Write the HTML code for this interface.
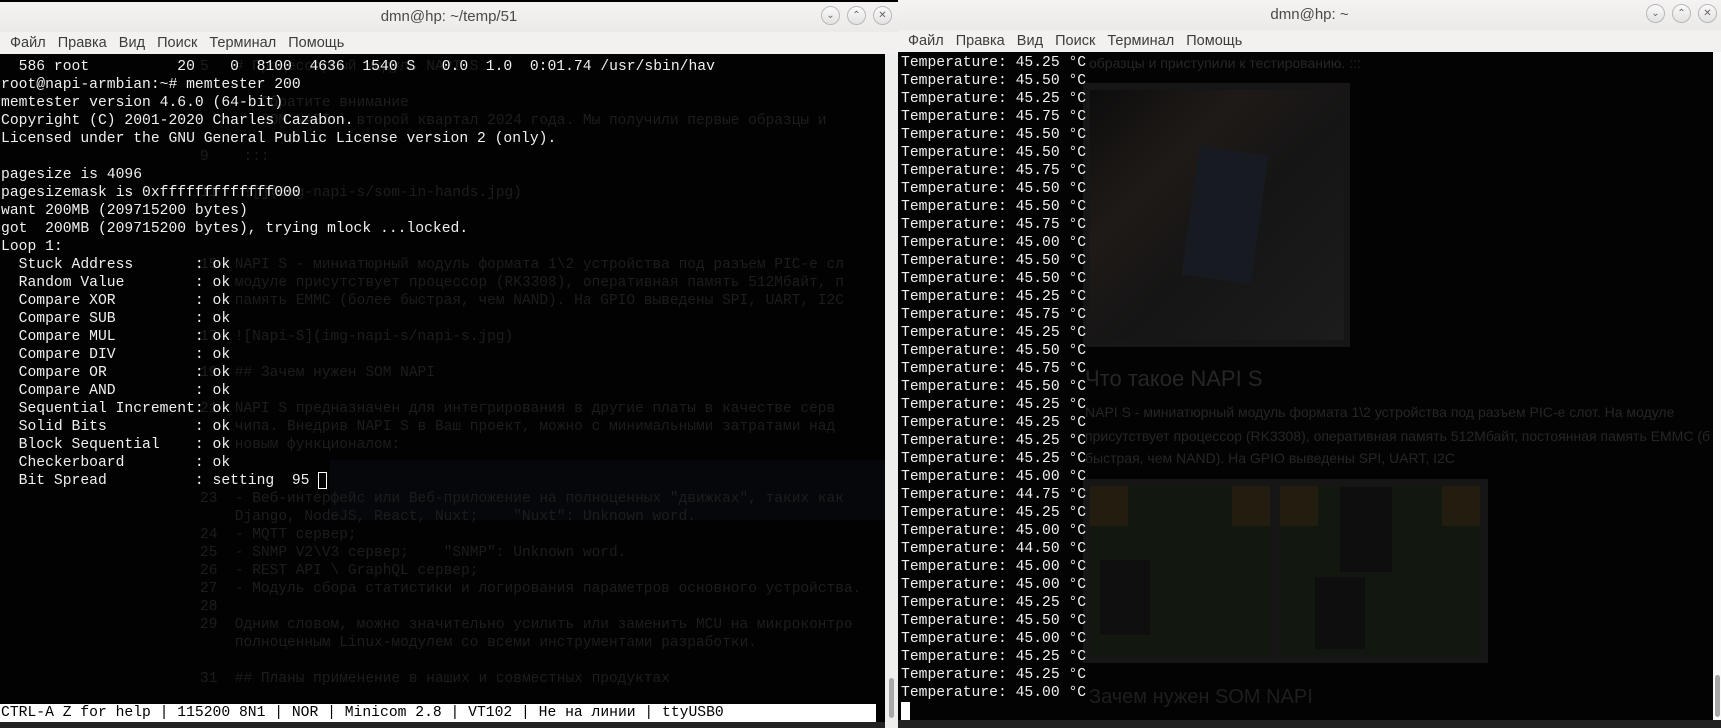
<!DOCTYPE html>
<html><head><meta charset="utf-8"><style>
*{margin:0;padding:0;box-sizing:border-box}
body{width:1721px;height:728px;background:#1b1b1b;position:relative;overflow:hidden;font-family:"Liberation Sans","DejaVu Sans",sans-serif}
.abs{position:absolute}
.title{background:linear-gradient(#f4f3f2,#ebeae9);color:#4a4a4a;font-size:15px;text-align:center;line-height:30px}
.menu{background:#f2f1f0;color:#3c3c3c;font-size:14.5px;line-height:22px;white-space:pre}
.btn{position:absolute;top:6px;width:19px;height:19px;border-radius:50%;border:1px solid #b8b8b8;background:linear-gradient(#fafafa,#e2e2e2);color:#666;font-size:10px;line-height:17px;text-align:center}
pre{font-family:"Liberation Mono","DejaVu Sans Mono",monospace;font-size:14.7px;line-height:18px;color:#f0f0f0;position:absolute;white-space:pre}
.ghost{font-family:"Liberation Mono",monospace;font-size:14.5px;line-height:18px;color:#1d1d1d;white-space:pre;position:absolute}
.gs{font-family:"Liberation Sans","DejaVu Sans",sans-serif;color:#262626;position:absolute;white-space:pre}
</style></head><body>
<div class="abs" style="left:0;top:0;width:898px;height:728px;background:#000"></div>
<div class="abs title" style="left:0;top:2px;width:898px;height:30px">dmn@hp: ~/temp/51</div>
<div class="btn" style="left:821px;top:6px">&#8964;</div>
<div class="btn" style="left:847px;top:6px">&#8963;</div>
<div class="btn" style="left:873px;top:6px">&#10005;</div>
<div class="abs menu" style="left:0;top:32px;width:898px;height:22px;padding-left:10px">Файл   Правка   Вид   Поиск   Терминал   Помощь</div>
<div class="abs" style="left:0;top:54px;width:885px;height:650px;background:#020202"></div>
<div class="abs" style="left:330px;top:460px;width:555px;height:60px;background:#05070a"></div>
<div class="ghost" style="left:200px;top:58px">5   # Процессорный модуль NAPI S</div>
<div class="ghost" style="left:200px;top:94px">       Обратите внимание</div>
<div class="ghost" style="left:200px;top:112px">       SOM NAPI - второй квартал 2024 года. Мы получили первые образцы и</div>
<div class="ghost" style="left:200px;top:148px">9    :::</div>
<div class="ghost" style="left:200px;top:184px">11   ![](img-napi-s/som-in-hands.jpg)</div>
<div class="ghost" style="left:200px;top:256px">15  NAPI S - миниатюрный модуль формата 1\2 устройства под разъем PIC-e сл</div>
<div class="ghost" style="left:200px;top:274px">    модуле присутствует процессор (RK3308), оперативная память 512Мбайт, п</div>
<div class="ghost" style="left:200px;top:292px">    память EMMC (более быстрая, чем NAND). На GPIO выведены SPI, UART, I2C</div>
<div class="ghost" style="left:200px;top:328px">17  ![Napi-S](img-napi-s/napi-s.jpg)</div>
<div class="ghost" style="left:200px;top:364px">19  ## Зачем нужен SOM NAPI</div>
<div class="ghost" style="left:200px;top:400px">21  NAPI S предназначен для интегрирования в другие платы в качестве серв</div>
<div class="ghost" style="left:200px;top:418px">    чипа. Внедрив NAPI S в Ваш проект, можно с минимальными затратами над</div>
<div class="ghost" style="left:200px;top:436px">    новым функционалом:</div>
<div class="ghost" style="left:200px;top:490px">23  - Веб-интерфейс или Веб-приложение на полноценных "движках", таких как</div>
<div class="ghost" style="left:200px;top:508px">    Django, NodeJS, React, Nuxt;    "Nuxt": Unknown word.</div>
<div class="ghost" style="left:200px;top:526px">24  - MQTT сервер;</div>
<div class="ghost" style="left:200px;top:544px">25  - SNMP V2\V3 сервер;    "SNMP": Unknown word.</div>
<div class="ghost" style="left:200px;top:562px">26  - REST API \ GraphQL сервер;</div>
<div class="ghost" style="left:200px;top:580px">27  - Модуль сбора статистики и логирования параметров основного устройства.</div>
<div class="ghost" style="left:200px;top:598px">28</div>
<div class="ghost" style="left:200px;top:616px">29  Одним словом, можно значительно усилить или заменить MCU на микроконтро</div>
<div class="ghost" style="left:200px;top:634px">    полноценным Linux-модулем со всеми инструментами разработки.</div>
<div class="ghost" style="left:200px;top:670px">31  ## Планы применение в наших и совместных продуктах</div>
<pre style="left:1px;top:58px">  586 root          20    0  8100  4636  1540 S   0.0  1.0  0:01.74 /usr/sbin/hav
root@napi-armbian:~# memtester 200
memtester version 4.6.0 (64-bit)
Copyright (C) 2001-2020 Charles Cazabon.
Licensed under the GNU General Public License version 2 (only).

pagesize is 4096
pagesizemask is 0xfffffffffffff000
want 200MB (209715200 bytes)
got  200MB (209715200 bytes), trying mlock ...locked.
Loop 1:
  Stuck Address       : ok
  Random Value        : ok
  Compare XOR         : ok
  Compare SUB         : ok
  Compare MUL         : ok
  Compare DIV         : ok
  Compare OR          : ok
  Compare AND         : ok
  Sequential Increment: ok
  Solid Bits          : ok
  Block Sequential    : ok
  Checkerboard        : ok
  Bit Spread          : setting  95</pre>
<div class="abs" style="left:318px;top:472px;width:9px;height:17px;border:1px solid #fff"></div>
<div class="abs" style="left:0;top:704px;width:876px;height:18px;background:#fff"></div>
<pre style="left:1px;top:704px;color:#000;line-height:18px">CTRL-A Z for help | 115200 8N1 | NOR | Minicom 2.8 | VT102 | Не на линии | ttyUSB0</pre>
<div class="abs" style="left:885px;top:54px;width:13px;height:674px;background:#eeeeec"></div>
<div class="abs" style="left:889px;top:678px;width:5px;height:40px;border-radius:3px;background:#a8a8a8"></div>
<div class="abs" style="left:0;top:722px;width:885px;height:6px;background:#222"></div>

<div class="abs" style="left:898px;top:0;width:823px;height:728px;background:#000"></div>
<div class="abs title" style="left:898px;top:0;width:823px;height:30px">dmn@hp: ~</div>
<div class="btn" style="left:1646px;top:4px">&#8964;</div>
<div class="btn" style="left:1672px;top:4px">&#8963;</div>
<div class="btn" style="left:1698px;top:4px">&#10005;</div>
<div class="abs menu" style="left:898px;top:30px;width:823px;height:22px;padding-left:10px">Файл   Правка   Вид   Поиск   Терминал   Помощь</div>
<div class="abs" style="left:898px;top:52px;width:815px;height:668px;background:#030303"></div>
<div class="gs" style="left:1089px;top:55px;font-size:14px">образцы и приступили к тестированию. :::</div>
<div class="abs" style="left:1083px;top:83px;width:267px;height:264px;background:#161616"></div>
<div class="abs" style="left:1090px;top:90px;width:254px;height:250px;background:linear-gradient(135deg,#0d0d0d 0%,#1f1a17 30%,#151515 55%,#1c1c1c 100%)"></div>
<div class="abs" style="left:1190px;top:150px;width:70px;height:130px;background:#171a20;transform:rotate(8deg)"></div>
<div class="gs" style="left:1085px;top:366px;font-size:22px">Что такое NAPI S</div>
<div class="gs" style="left:1085px;top:404px;font-size:14px">NAPI S - миниатюрный модуль формата 1\2 устройства под разъем PIC-e слот. На модуле</div>
<div class="gs" style="left:1085px;top:428px;font-size:14px">присутствует процессор (RK3308), оперативная память 512Мбайт, постоянная память EMMC (б</div>
<div class="gs" style="left:1085px;top:450px;font-size:14px">быстрая, чем NAND). На GPIO выведены SPI, UART, I2C</div>
<div class="abs" style="left:1083px;top:479px;width:405px;height:184px;background:#161616"></div>
<div class="abs" style="left:1090px;top:486px;width:180px;height:170px;background:#121810"></div>
<div class="abs" style="left:1280px;top:486px;width:200px;height:170px;background:#121810"></div>
<div class="abs" style="left:1090px;top:486px;width:38px;height:40px;background:#221d0e"></div>
<div class="abs" style="left:1232px;top:486px;width:38px;height:40px;background:#221d0e"></div>
<div class="abs" style="left:1280px;top:486px;width:38px;height:40px;background:#221d0e"></div>
<div class="abs" style="left:1442px;top:486px;width:38px;height:40px;background:#221d0e"></div>
<div class="abs" style="left:1340px;top:487px;width:52px;height:85px;background:#0e0e0e"></div>
<div class="abs" style="left:1315px;top:577px;width:50px;height:72px;background:#0e0e0e"></div>
<div class="abs" style="left:1100px;top:560px;width:50px;height:75px;background:#0f0f0f"></div>
<div class="gs" style="left:1089px;top:686px;font-size:20px;color:#1e1e1e">Зачем нужен SOM NAPI</div>
<pre style="left:901px;top:54px">Temperature: 45.25 °C
Temperature: 45.50 °C
Temperature: 45.25 °C
Temperature: 45.75 °C
Temperature: 45.50 °C
Temperature: 45.50 °C
Temperature: 45.75 °C
Temperature: 45.50 °C
Temperature: 45.50 °C
Temperature: 45.75 °C
Temperature: 45.00 °C
Temperature: 45.50 °C
Temperature: 45.50 °C
Temperature: 45.25 °C
Temperature: 45.75 °C
Temperature: 45.25 °C
Temperature: 45.50 °C
Temperature: 45.75 °C
Temperature: 45.50 °C
Temperature: 45.25 °C
Temperature: 45.25 °C
Temperature: 45.25 °C
Temperature: 45.25 °C
Temperature: 45.00 °C
Temperature: 44.75 °C
Temperature: 45.25 °C
Temperature: 45.00 °C
Temperature: 44.50 °C
Temperature: 45.00 °C
Temperature: 45.00 °C
Temperature: 45.25 °C
Temperature: 45.50 °C
Temperature: 45.00 °C
Temperature: 45.25 °C
Temperature: 45.25 °C
Temperature: 45.00 °C</pre>
<div class="abs" style="left:901px;top:702px;width:9px;height:18px;background:#fff"></div>
<div class="abs" style="left:1713px;top:52px;width:8px;height:668px;background:#fafafa"></div>
<div class="abs" style="left:1715px;top:675px;width:5px;height:42px;border-radius:3px;background:#a8a8a8"></div>
<div class="abs" style="left:898px;top:720px;width:823px;height:8px;background:#222"></div>
</body></html>
